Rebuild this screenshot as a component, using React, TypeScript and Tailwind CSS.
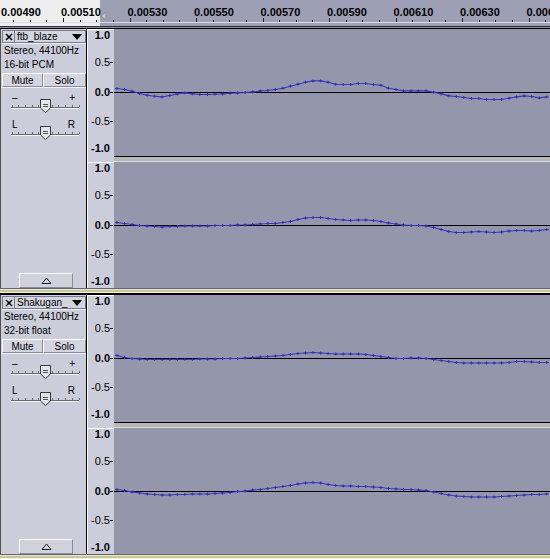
// Audacity-style track view: time ruler, two stereo tracks with info panels

const T1C1 = [-4, -3, -1.3, 1, 2.7, 3.7, 4.4, 3, 1.4, 0.4, 1.4, 2, 2, 1.7, 1.4, 0.7, 0.4, 0, -0.6, -1.6, -2, -3, -4.3, -6.3, -8.3, -10.3, -11.6, -11.6, -10.3, -8.3, -8, -8, -9, -9, -8, -7.3, -4.3, -3, -1.6, -1.6, -1.6, -1.6, -0.3, 1.4, 3.4, 4, 5, 6, 6, 7, 7, 7, 5.7, 4.4, 3.4, 4, 5.4, 4.4]
const T1C2 = [-3, -2, -1, 0, 0.5, 1, 1.5, 1, 1, 0.5, 0.5, 0.5, 0.5, 0, 0, 0, -0.5, -0.5, -1, -1.5, -2, -2, -3, -4, -6, -7.5, -8, -8, -7, -6, -5.5, -5, -5.5, -5.5, -5, -4, -2.5, -1.5, -0.5, 0, 0, 0.5, 2, 4, 6, 7, 7, 6.5, 6, 6.5, 7, 6.5, 5.5, 5, 5, 5.5, 5, 4]
const T2C1 = [-3, -1, 0, 0.5, 1, 1, 1, 1, 1, 1, 1, 0.5, 0.5, 0.5, 0, 0, 0, -0.5, -1, -1.5, -2, -2.5, -3, -4, -5, -5.5, -6, -5.5, -5, -4.5, -4.5, -4.5, -4.5, -4, -3, -2, -1, 0, 0, -0.5, -0.5, 0, 1, 2, 3, 4, 4.5, 4.5, 4.5, 4.5, 4.5, 4.5, 4, 3, 3, 3.5, 4, 4]
const T2C2 = [-2, -1, 0.5, 1.5, 2.5, 3, 3.5, 3.5, 3, 3, 2.5, 2.5, 2.5, 2, 1.5, 1, 0, -0.5, -1.5, -2, -3, -4, -5, -6, -7.5, -8.5, -9, -8.5, -7, -6, -5.5, -5.5, -5, -5, -4.5, -4, -3, -2.5, -2, -2, -1.5, -1, 0.5, 2, 3.5, 4.5, 5, 5.5, 5.5, 5.5, 5.5, 5, 4.5, 4, 3.5, 3, 3, 2.5]

const RULER_LABELS = [
  { t: "0.00490", x: 1 },
  { t: "0.00510", x: 61 },
  { t: "0.00530", x: 127.5 },
  { t: "0.00550", x: 194 },
  { t: "0.00570", x: 260.5 },
  { t: "0.00590", x: 327 },
  { t: "0.00610", x: 393.5 },
  { t: "0.00630", x: 460 },
  { t: "0.00650", x: 526.5 },
]

function TimeRuler() {
  const ticks = Array.from({ length: 35 }, (_, k) => -3.5 + k * 16.625).filter((x) => x > 0)
  return (
    <div className="relative h-[26px] flex">
      <div className="w-[100px] bg-[#eeeeee]" />
      <div className="flex-1 bg-[#9d9fb4]" />
      <svg width="550" height="26" className="absolute left-0 top-0">
        <line x1="0" y1="22.5" x2="550" y2="22.5" stroke="#dcdce4" />
        {ticks.map((x, k) => {
          const major = (k + 1) % 4 === 0
          const r = Math.round(x) + 0.5
          return <line key={k} x1={r} x2={r} y1={major ? 18 : 20} y2="22" stroke="#202020" />
        })}
        <path d="M106 12 L101 16 L106 20 Z" fill="#c8c8c8" stroke="#8a8a8a" />
      </svg>
      {RULER_LABELS.map((l) => (
        <span
          key={l.t}
          className="absolute top-[5px] text-[11px] leading-[14px] font-bold text-black whitespace-nowrap"
          style={{ left: l.x }}
        >
          {l.t}
        </span>
      ))}
    </div>
  )
}

function Thumb() {
  return (
    <svg width="11" height="14" className="block">
      <path d="M0.5 0.5 H10.5 V9 L5.5 13.5 L0.5 9 Z" fill="#e4e4ec" stroke="#3a3a3a" />
      <line x1="3" x2="8" y1="5.5" y2="5.5" stroke="#555" />
      <line x1="3" x2="8" y1="7.5" y2="7.5" stroke="#555" />
    </svg>
  )
}

function Slider({ left, right }: { left: string; right: string }) {
  const marks = Array.from({ length: 11 }, (_, i) => 0.5 + i * 6.7)
  return (
    <div className="relative h-[27px]">
      <div className="flex justify-between px-[11px] text-[10px] leading-[12px] text-black">
        <span>{left}</span>
        <span>{right}</span>
      </div>
      <svg width="70" height="8" className="absolute left-[10px] top-[10px]">
        <line x1="0" x2="68" y1="5.5" y2="5.5" stroke="#6a6a6a" />
        <line x1="0" x2="68" y1="6.5" y2="6.5" stroke="#f4f4f8" />
        {marks.map((x) => (
          <line key={x} x1={Math.round(x) + 0.5} x2={Math.round(x) + 0.5} y1="3" y2="5" stroke="#6a6a6a" />
        ))}
      </svg>
      <div className="absolute left-[39px] top-[7px]">
        <Thumb />
      </div>
    </div>
  )
}

function TrackInfo({ name, fmt }: { name: string; fmt: string }) {
  return (
    <div className="w-[87px] shrink-0 flex flex-col bg-[#cccddb] border-l border-l-[#505050] border-r border-r-black text-black text-[10px]">
      {/* header: close box + name dropdown */}
      <div className="mt-px ml-px h-[14px] flex border-b border-[#eeeef4]">
        <div className="w-[13px] h-[13px] flex items-center justify-center border border-[#7a7a88] bg-[#d4d4e0]">
          <svg width="8" height="8">
            <path d="M1 1 L7 7 M7 1 L1 7" stroke="#000" strokeWidth="1.6" />
          </svg>
        </div>
        <div className="flex-1 h-[13px] flex items-center justify-between pl-[2px] pr-[3px] border border-[#7a7a88] border-l-0 bg-[#d4d4e0]">
          <span className="text-[10px] leading-[11px]">{name}</span>
          <svg width="10" height="6">
            <path d="M0 0 H10 L5 6 Z" fill="#000" />
          </svg>
        </div>
      </div>
      <div className="pl-[3px] leading-[14px]">Stereo, 44100Hz</div>
      <div className="pl-[3px] leading-[14px]">{fmt}</div>
      <div className="ml-px mt-px h-[14px] flex">
        <div className="w-[41px] flex items-center justify-center border-t border-l border-white border-b border-r border-b-[#8a8a98] border-r-[#8a8a98] bg-[#d4d5e1]">
          Mute
        </div>
        <div className="flex-1 flex items-center justify-center border-t border-l border-white border-b border-r border-b-[#8a8a98] border-r-[#8a8a98] bg-[#d4d5e1]">
          Solo
        </div>
      </div>
      <div className="h-px bg-[#f2f2f6]" />
      <div className="pt-[4px] flex flex-col">
        <Slider left="–" right="+" />
        <Slider left="L" right="R" />
      </div>
      <div className="flex-1" />
      <div className="ml-[18px] w-[54px] h-[15px] flex items-center justify-center border-t border-l border-white border-b border-r border-b-[#8a8a98] border-r-[#8a8a98] bg-[#d0d1dd]">
        <svg width="11" height="7">
          <path d="M1 6.5 L5.5 1 L10 6.5 Z" fill="none" stroke="#202020" />
        </svg>
      </div>
    </div>
  )
}

const VLABELS = [
  { t: "1.0", y: 6, b: true, tick: false },
  { t: "0.5", y: 33, b: false, tick: true },
  { t: "0.0", y: 63, b: true, tick: true },
  { t: "-0.5", y: 92, b: false, tick: true },
  { t: "-1.0", y: 119, b: true, tick: false },
]

function VRuler() {
  return (
    <div className="relative w-[27px] shrink-0 h-full bg-[#cccddb] border-l border-t border-white">
      {VLABELS.map((l) => (
        <div key={l.t}>
          <span
            className={`absolute right-[4px] text-[11px] leading-[12px] text-black ${l.b ? "font-bold" : ""}`}
            style={{ top: l.y - 7 }}
          >
            {l.t}
          </span>
          {l.tick && <div className="absolute right-px w-[3px] h-px bg-black" style={{ top: l.y - 1 }} />}
        </div>
      ))}
    </div>
  )
}

function Wave({ offs, h }: { offs: number[]; h: number }) {
  const pts = offs.map((o, i) => [3 + i * 7.54, 63.5 + o])
  const d = pts.map(([x, y], i) => `${i ? "L" : "M"}${x.toFixed(1)} ${y.toFixed(1)}`).join(" ")
  const marks = pts
    .map(([x, y]) => `M${(x - 2).toFixed(1)} ${y.toFixed(1)}h4M${x.toFixed(1)} ${(y - 1.5).toFixed(1)}v3`)
    .join("")
  return (
    <svg width="436" height={h} className="block bg-[#9496ab]">
      <line x1="0" y1="63.5" x2="436" y2="63.5" stroke="#000" />
      <path d={d} fill="none" stroke="#3a3ac6" strokeWidth="1.1" />
      <path d={marks} stroke="#3030b4" strokeWidth="1" />
    </svg>
  )
}

function Track({ name, fmt, a, b }: { name: string; fmt: string; a: number[]; b: number[] }) {
  return (
    <div className="flex h-[261px] border-t border-black border-b border-b-[#666670]">
      <TrackInfo name={name} fmt={fmt} />
      <div className="flex-1 flex flex-col">
        <div className="h-[127px] flex">
          <VRuler />
          <Wave offs={a} h={127} />
        </div>
        {/* channel divider */}
        <div className="h-[6px] flex">
          <div className="w-[27px] bg-[#cccddb] border-l border-white" />
          <div className="flex-1 flex flex-col">
            <div className="h-px bg-black" />
            <div className="h-[4px] bg-[#b6b8b4]" />
            <div className="h-px bg-[#dcdcdc]" />
          </div>
        </div>
        <div className="h-[126px] flex">
          <VRuler />
          <Wave offs={b} h={126} />
        </div>
      </div>
    </div>
  )
}

function Gap() {
  return (
    <div className="flex flex-col">
      <div className="h-px bg-[#e6e6cc]" />
      <div className="h-[2px] bg-[#c8c89a]" />
      <div className="h-px bg-[#f2f2e2]" />
    </div>
  )
}

export default function App() {
  return (
    <div className="w-[550px] h-[559px] overflow-hidden bg-[#ecebc8] font-['Liberation_Sans',Arial,sans-serif]">
      <TimeRuler />
      <div className="h-px bg-[#303030]" />
      <div className="h-px bg-[#8c8ea0]" />
      <Track name="ftb_blaze" fmt="16-bit PCM" a={T1C1} b={T1C2} />
      <Gap />
      <div className="h-px bg-black" />
      <Track name="Shakugan_" fmt="32-bit float" a={T2C1} b={T2C2} />
      <Gap />
    </div>
  )
}
